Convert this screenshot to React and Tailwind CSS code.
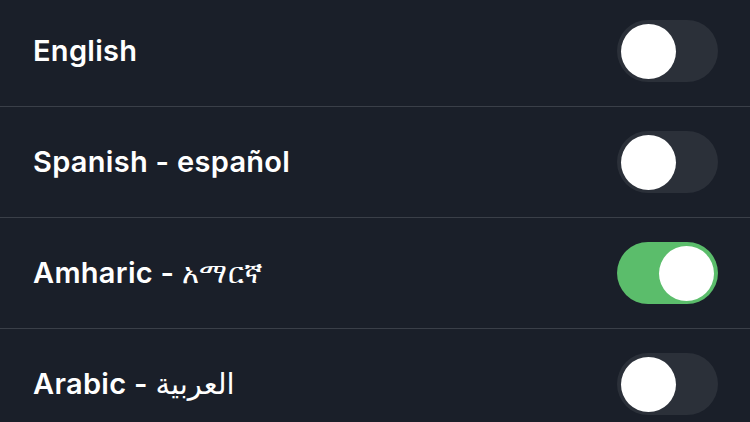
import { useState } from "react";

const initialLanguages = [
  { code: "en", name: "English", native: "", enabled: false },
  { code: "es", name: "Spanish - español", native: "", enabled: false },
  { code: "am", name: "Amharic - ", native: "አማርኛ", enabled: true },
  { code: "ar", name: "Arabic - ", native: "العربية", enabled: false },
];

function Toggle({ checked, onChange }) {
  return (
    <button
      className={`flex h-[62px] w-[101px] items-center rounded-full px-[4px] ${
        checked ? "justify-end bg-[#5bbd6b]" : "justify-start bg-[#2b3039]"
      }`}
      onClick={onChange}
      type="button"
    >
      <span className="h-[55px] w-[55px] rounded-full bg-white" />
    </button>
  );
}

function App() {
  const [languages, setLanguages] = useState(initialLanguages);

  const handleToggle = (code) => {
    setLanguages(
      languages.map((language) =>
        language.code === code ? { ...language, enabled: !language.enabled } : language
      )
    );
  };

  return (
    <div className="h-[422px] w-[750px] overflow-hidden bg-[#1a1f29]">
      <div className="-mt-[4px]">
        {languages.map((language) => (
          <div
            className="flex h-[111px] items-center justify-between border-b border-[#3a3f48] pl-[33px] pr-[32px]"
            key={language.code}
          >
            <span className="whitespace-pre font-['Inter','DejaVu_Sans',sans-serif] text-[29px] font-semibold tracking-[0.3px] text-white">
              {language.name}
              {language.native && <span className="font-normal">{language.native}</span>}
            </span>
            <Toggle
              checked={language.enabled}
              onChange={() => handleToggle(language.code)}
            />
          </div>
        ))}
      </div>
    </div>
  );
}

export default App;
